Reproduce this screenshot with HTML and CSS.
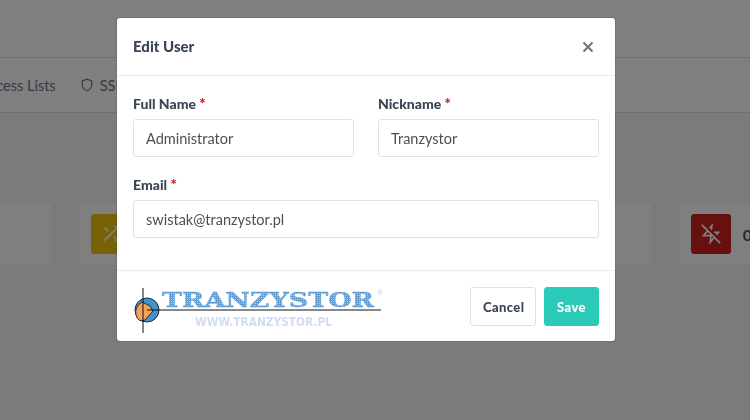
FILE: index.html
```html
<!DOCTYPE html>
<html lang="en">
<head>
    <meta charset="UTF-8">
    <title>Edit User</title>
    <link rel="stylesheet" href="styles.css">
</head>
<body>
    <div class="page">
        <div class="topbar"></div>
        <div class="nav">
            <span class="nav-item">Hosts</span>
            <span class="nav-item">Access Lists</span>
            <span class="nav-item">
                <svg class="nav-icon" viewBox="0 0 24 24"><path d="M12 22s8-4 8-10V5l-8-3-8 3v7c0 6 8 10 8 10z"/></svg>
                SSL Certificates
            </span>
            <span class="nav-item">Users</span>
        </div>
        <div class="stats">
            <div class="stat"><span class="stat-icon green"></span><span class="stat-text">0</span></div>
            <div class="stat">
                <span class="stat-icon yellow">
                    <svg viewBox="0 0 24 24"><path d="M16 3h5v5M4 20L21 3M21 16v5h-5M15 15l6 6M4 4l5 5"/></svg>
                </span>
                <span class="stat-text">0</span>
            </div>
            <div class="stat"><span class="stat-icon blue"></span><span class="stat-text">0</span></div>
            <div class="stat">
                <span class="stat-icon red">
                    <svg viewBox="0 0 24 24"><path d="M12.410 6.750L13 2l-2.430 2.920M18.570 12.910L21 10h-5.340M8 8l-5 6h9l-1 8 5-6M1 1l22 22"/></svg>
                </span>
                <span class="stat-text">0</span>
            </div>
        </div>
    </div>

    <div class="backdrop">
        <div class="modal">
            <div class="modal-header">
                <h5>Edit User</h5>
                <svg class="close" viewBox="0 0 12 12"><path d="M1.500 1.500l9 9M10.500 1.500l-9 9"/></svg>
            </div>
            <div class="modal-body">
                <div class="row">
                    <div class="field">
                        <label>Full Name <span class="req">*</span></label>
                        <input type="text" value="Administrator">
                    </div>
                    <div class="field">
                        <label>Nickname <span class="req">*</span></label>
                        <input type="text" value="Tranzystor">
                    </div>
                </div>
                <div class="field">
                    <label>Email <span class="req">*</span></label>
                    <input type="text" value="swistak@tranzystor.pl">
                </div>
            </div>
            <div class="modal-footer">
                <svg class="logo" viewBox="0 0 250 50" width="250" height="50">
                    <defs>
                        <pattern id="dots" width="2" height="2" patternUnits="userSpaceOnUse">
                            <rect width="2" height="2" fill="#5f9fd8"/>
                            <rect width="1" height="1" fill="#a8cdee"/>
                        </pattern>
                    </defs>
                    <circle cx="14" cy="25" r="12" fill="#3f93d2" stroke="#1c2a3a"/>
                    <path d="M9 17 L17 21 L20 26 L12 35 Q5 38 3 30 Q1 22 9 17 Z" fill="#f2a35e" stroke="#2a2a2a"/>
                    <path d="M10 3V48M14 25H248" stroke="#111" stroke-width="1"/>
                    <text class="logo-name" x="29" y="22" textLength="212" lengthAdjust="spacingAndGlyphs" fill="url(#dots)">TRANZYSTOR</text>
                    <text class="logo-reg" x="244" y="10">®</text>
                    <text class="logo-url" x="62" y="41" textLength="137" lengthAdjust="spacingAndGlyphs">WWW.TRANZYSTOR.PL</text>
                </svg>
                <button class="btn btn-cancel">Cancel</button>
                <button class="btn btn-save">Save</button>
            </div>
        </div>
    </div>
</body>
</html>
```

FILE: styles.css
```css
body {
    margin: 0;
    height: 420px;
    overflow: hidden;
    font-family: Lato, "Noto Sans", sans-serif;
    font-size: 14.500px;
    background-color: #f5f7fb;
    color: #495057;
}
.page {
    width: 750px;
    overflow: hidden;
}
.topbar {
    height: 57px;
    background: #fff;
    border-bottom: 1px solid #dcdee2;
}
.nav {
    display: flex;
    align-items: center;
    gap: 24px;
    height: 54px;
    margin-left: -81px;
    background: #fff;
    border-bottom: 1px solid #dcdee2;
    white-space: nowrap;
    color: #6e7687;
}
.nav-item {
    display: flex;
    align-items: center;
    gap: 6px;
}
.nav-icon {
    width: 14px;
    height: 14px;
    fill: none;
    stroke: currentColor;
    stroke-width: 2;
}
.stats {
    display: flex;
    gap: 25px;
    width: 1174px;
    margin: 89px 0 0 -221.500px;
}
.stat {
    flex: 1;
    display: flex;
    align-items: center;
    gap: 12px;
    height: 64px;
    padding: 0 12px;
    background: #fff;
    border: 1px solid #eceef1;
    border-radius: 3px;
    box-sizing: border-box;
}
.stat-icon {
    display: flex;
    align-items: center;
    justify-content: center;
    width: 40px;
    height: 40px;
    border-radius: 3px;
}
.stat-icon svg {
    width: 20px;
    height: 20px;
    fill: none;
    stroke: #fff;
    stroke-width: 2;
}
.stat-text {
    font-weight: 700;
    font-size: 16px;
}
.green { background: #5eba00; }
.yellow { background: #f1c40f; }
.blue { background: #467fcf; }
.red { background: #cd201f; }

.backdrop {
    position: fixed;
    top: 0;
    left: 0;
    right: 0;
    bottom: 0;
    padding: 18px 0 0 117px;
    background: rgba(0, 0, 0, 0.5);
}
.modal {
    width: 498px;
    height: 323px;
    background: #fff;
    border-radius: 3px;
    box-shadow: 0 0 0 1px rgba(0, 0, 0, 0.1);
}
.modal-header {
    display: flex;
    align-items: center;
    justify-content: space-between;
    height: 57px;
    padding: 0 21px 0 16px;
    border-bottom: 1px solid #e9ecef;
}
.modal-header h5 {
    margin: 0 0 2px;
    font-size: 15px;
    font-weight: 900;
    color: #3a4656;
}
.close {
    width: 12px;
    height: 12px;
    fill: none;
    stroke: #6c757d;
    stroke-width: 2;
}
.modal-body {
    display: flex;
    flex-direction: column;
    gap: 18px;
    height: 195px;
    padding: 18px 16px 0;
    box-sizing: border-box;
    border-bottom: 1px solid #e9ecef;
}
.row {
    display: flex;
    gap: 24px;
}
.field {
    flex: 1;
    display: flex;
    flex-direction: column;
    gap: 7px;
}
.field label {
    height: 18px;
    line-height: 18px;
    font-size: 14px;
    font-weight: 900;
    color: #3a4656;
}
.req {
    color: #cd201f;
    font-size: 15px;
}
.field input {
    height: 38px;
    padding: 0 12px;
    box-sizing: border-box;
    width: 100%;
    border: 1px solid #dee2e6;
    border-radius: 3px;
    font-family: inherit;
    font-size: 14.500px;
    color: #495057;
}
.modal-footer {
    display: flex;
    align-items: center;
    gap: 8px;
    height: 69px;
    padding: 1px 16px 0;
}
.logo {
    align-self: flex-start;
    margin: 13px auto 0 0;
}
.logo-name {
    font-family: "DejaVu Serif", serif;
    font-weight: 700;
    font-size: 20px;
    stroke: #5f9fd8;
    stroke-width: 0.400;
}
.logo-reg {
    font-size: 8px;
    fill: #c5d8ec;
}
.logo-url {
    font-family: "DejaVu Sans", sans-serif;
    font-weight: 700;
    font-size: 13px;
    fill: #d2ddf0;
}
.btn {
    height: 39px;
    padding: 0 12px;
    border-radius: 3px;
    font-family: inherit;
    font-size: 13px;
    font-weight: 900;
    letter-spacing: 0.400px;
}
.btn-cancel {
    width: 66px;
    background: #fff;
    border: 1px solid #dee2e6;
    color: #3a4656;
}
.btn-save {
    width: 55px;
    background: #2bcbba;
    border: 1px solid #2bcbba;
    color: #fff;
}
```
